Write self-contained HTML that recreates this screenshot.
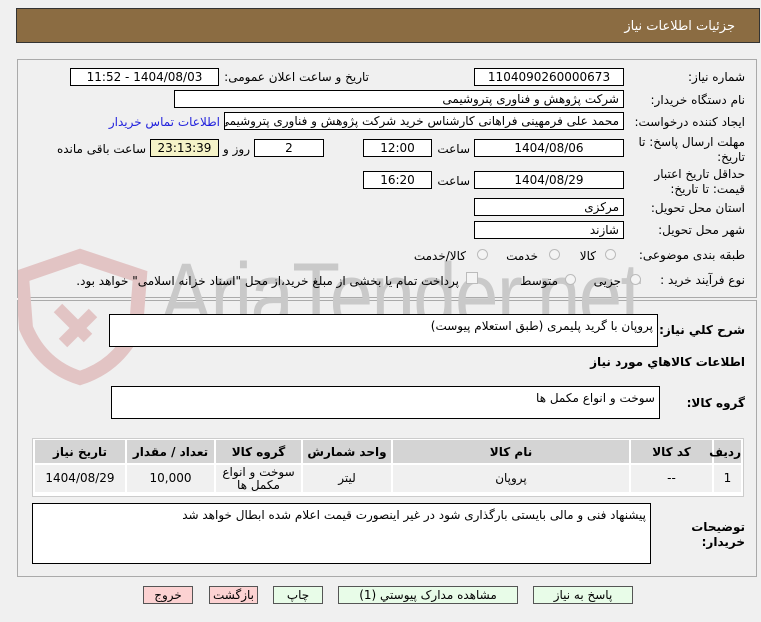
<!DOCTYPE html>
<html><head><meta charset="utf-8"><style>
body{margin:0;width:761px;height:622px;background:#f0f0f0;font-family:"DejaVu Sans","Liberation Sans",sans-serif;font-size:12px;color:#000;position:relative;overflow:hidden}
.a{position:absolute}
.box{position:absolute;background:#fff;border:1px solid #000;box-sizing:border-box;direction:rtl;padding:0 4px;line-height:16px;white-space:nowrap;overflow:hidden}
.c{text-align:center}
.lbl{position:absolute;direction:rtl;white-space:nowrap;text-align:right}
.r{position:absolute;width:11px;height:11px;border-radius:50%;border:1px solid #bbb;background:#f4f4f4;box-sizing:border-box}
.btn{position:absolute;top:586px;height:18px;border:1px solid #555;box-sizing:border-box;text-align:center;line-height:16px;direction:rtl;font-size:12px}
table{border-collapse:separate;border-spacing:2px;table-layout:fixed}
td{text-align:center;direction:rtl;padding:0}
</style></head><body>
<div class="a" style="left:16px;top:8px;width:744px;height:35px;background:#8b6c42;border:1px solid #333;box-sizing:border-box"></div>
<div class="lbl" style="right:26px;top:19px;color:#fff;font-size:13px">جزئیات اطلاعات نیاز</div>

<div class="a" style="left:17px;top:59px;width:740px;height:239px;border:1px solid #aaa;box-sizing:border-box"></div>
<div class="a" style="left:17px;top:300px;width:740px;height:277px;border:1px solid #aaa;box-sizing:border-box"></div>

<svg class="a" style="left:18px;top:248px" width="130" height="140" viewBox="0 0 130 140">
<path d="M62 8 L122 28 L118 80 Q100 118 62 130 Q24 118 8 80 L4 28 Z" fill="none" stroke="#e2c4c4" stroke-width="14"/>
<path d="M40 60 L70 90 M45 95 L75 65" stroke="#e2c4c4" stroke-width="12" fill="none"/>
</svg>
<div class="a" style="left:160px;top:246px;font-size:92px;color:#c9c9c9;font-family:'Liberation Sans',sans-serif;letter-spacing:-2px;line-height:100px;transform:scaleX(0.85);transform-origin:left">AriaTender.net</div>

<div class="lbl" style="right:16px;top:70px">شماره نیاز:</div>
<div class="box c" style="left:474px;top:68px;width:150px;height:18px">1104090260000673</div>
<div class="lbl" style="right:392px;top:70px">تاریخ و ساعت اعلان عمومی:</div>
<div class="box c" style="left:70px;top:68px;width:149px;height:18px">1404/08/03 - 11:52</div>

<div class="lbl" style="right:16px;top:93px">نام دستگاه خریدار:</div>
<div class="box" style="left:174px;top:90px;width:450px;height:18px">شرکت پژوهش و فناوری پتروشیمی</div>

<div class="lbl" style="right:16px;top:115px">ایجاد کننده درخواست:</div>
<div class="box" style="left:224px;top:112px;width:400px;height:18px">محمد علی فرمهینی فراهانی کارشناس خرید شرکت پژوهش و فناوری پتروشیمی</div>
<div class="lbl" style="right:541px;top:115px;color:#2222dd">اطلاعات تماس خریدار</div>

<div class="lbl" style="right:16px;top:135px;line-height:15px">مهلت ارسال پاسخ: تا<br>تاریخ:</div>
<div class="box c" style="left:474px;top:139px;width:150px;height:18px">1404/08/06</div>
<div class="lbl" style="right:291px;top:142px">ساعت</div>
<div class="box c" style="left:363px;top:139px;width:69px;height:18px">12:00</div>
<div class="box c" style="left:254px;top:139px;width:70px;height:18px">2</div>
<div class="lbl" style="right:511px;top:142px">روز و</div>
<div class="box c" style="left:150px;top:139px;width:69px;height:18px;background:#f5f3c8">23:13:39</div>
<div class="lbl" style="right:615px;top:142px">ساعت باقی مانده</div>

<div class="lbl" style="right:16px;top:167px;line-height:15px">حداقل تاریخ اعتبار<br>قیمت: تا تاریخ:</div>
<div class="box c" style="left:474px;top:171px;width:150px;height:18px">1404/08/29</div>
<div class="lbl" style="right:291px;top:174px">ساعت</div>
<div class="box c" style="left:363px;top:171px;width:69px;height:18px">16:20</div>

<div class="lbl" style="right:16px;top:201px">استان محل تحویل:</div>
<div class="box" style="left:474px;top:198px;width:150px;height:18px">مرکزی</div>
<div class="lbl" style="right:16px;top:223px">شهر محل تحویل:</div>
<div class="box" style="left:474px;top:221px;width:150px;height:18px">شازند</div>

<div class="lbl" style="right:16px;top:248px">طبقه بندی موضوعی:</div>
<div class="r" style="left:605px;top:249px"></div><div class="lbl" style="right:165px;top:249px">کالا</div>
<div class="r" style="left:549px;top:249px"></div><div class="lbl" style="right:223px;top:249px">خدمت</div>
<div class="r" style="left:477px;top:249px"></div><div class="lbl" style="right:295px;top:249px">کالا/خدمت</div>

<div class="lbl" style="right:16px;top:273px">نوع فرآیند خرید :</div>
<div class="r" style="left:630px;top:274px"></div><div class="lbl" style="right:140px;top:274px">جزیی</div>
<div class="r" style="left:565px;top:274px"></div><div class="lbl" style="right:203px;top:274px">متوسط</div>
<div class="a" style="left:466px;top:272px;width:12px;height:12px;border:1px solid #bbb;background:#f4f4f4;box-sizing:border-box"></div>
<div class="lbl" style="right:302px;top:274px">پرداخت تمام یا بخشی از مبلغ خرید،از محل "اسناد خزانه اسلامی" خواهد بود.</div>

<div class="lbl" style="right:16px;top:323px;font-weight:bold">شرح کلي نیاز:</div>
<div class="box" style="left:109px;top:314px;width:549px;height:33px;line-height:22px">پروپان با گرید پلیمری (طبق استعلام پیوست)</div>
<div class="lbl" style="right:16px;top:355px;font-weight:bold">اطلاعات کالاهاي مورد نیاز</div>
<div class="lbl" style="right:16px;top:396px;font-weight:bold">گروه کالا:</div>
<div class="box" style="left:111px;top:386px;width:549px;height:33px;line-height:22px">سوخت و انواع مکمل ها</div>

<div class="a" style="left:32px;top:438px;width:712px;height:59px;border:1px solid #ccc;box-sizing:border-box;background:#fff">
<table style="width:710px;direction:rtl;margin:-1px 0 0 0">
<tr style="background:#d4d4d4;font-weight:bold;height:23px"><td style="width:27px">ردیف</td><td style="width:81px">کد کالا</td><td style="width:236px">نام کالا</td><td style="width:88px">واحد شمارش</td><td style="width:85px">گروه کالا</td><td style="width:87px">تعداد / مقدار</td><td>تاریخ نیاز</td></tr>
<tr style="background:#f0f0f0;height:27px;line-height:13px"><td>1</td><td>--</td><td>پروپان</td><td>لیتر</td><td>سوخت و انواع مکمل ها</td><td>10,000</td><td>1404/08/29</td></tr>
</table></div>

<div class="lbl" style="right:16px;top:520px;font-weight:bold;line-height:15px">توضیحات<br>خریدار:</div>
<div class="box" style="left:32px;top:503px;width:619px;height:61px;line-height:22px;white-space:normal">پیشنهاد فنی و مالی بایستی بارگذاری شود در غیر اینصورت قیمت اعلام شده ابطال خواهد شد</div>

<div class="btn" style="left:143px;width:50px;background:#fcd2d2">خروج</div>
<div class="btn" style="left:209px;width:49px;background:#fcd2d2">بازگشت</div>
<div class="btn" style="left:273px;width:50px;background:#e8fce8">چاپ</div>
<div class="btn" style="left:338px;width:180px;background:#e8fce8">مشاهده مدارک پیوستي (1)</div>
<div class="btn" style="left:533px;width:100px;background:#e8fce8">پاسخ به نیاز</div>
</body></html>
